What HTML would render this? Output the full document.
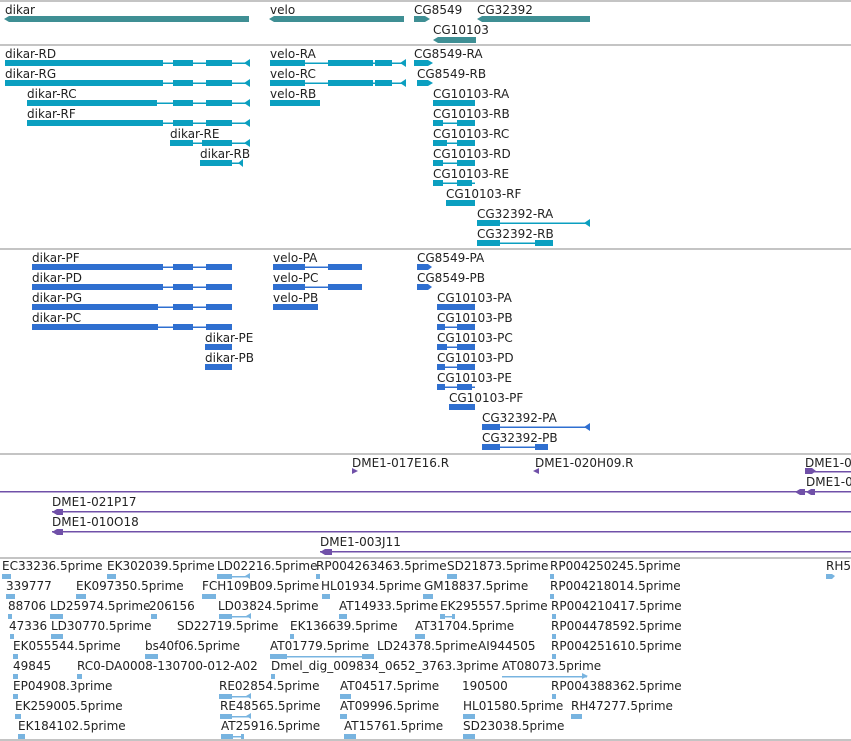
<!DOCTYPE html>
<html><head><meta charset="utf-8"><style>
html,body{margin:0;padding:0;background:#fff;width:851px;height:741px;overflow:hidden}
svg{display:block}
text{font-family:"DejaVu Sans","Liberation Sans",sans-serif;font-size:12px;fill:#222}
.g{fill:#3f8f94}.t{fill:#0b9fc0}.p{fill:#2f6fd0}.d{fill:#7050a8}.e{fill:#78b4e0}
.sep{stroke:#c4c4c4;stroke-width:2}
</style></head><body>
<svg width="851" height="741" viewBox="0 0 851 741">
<g class="sep"><line x1="0" y1="1" x2="851" y2="1"/><line x1="0" y1="45" x2="851" y2="45"/><line x1="0" y1="249" x2="851" y2="249"/><line x1="0" y1="454" x2="851" y2="454"/><line x1="0" y1="558" x2="851" y2="558"/><line x1="0" y1="740" x2="851" y2="740"/></g>

<!-- genes -->
<text x="5" y="14">dikar</text><polygon class="g" points="4,19 9,16 249,16 249,22 9,22"/>
<text x="270" y="14">velo</text><polygon class="g" points="269,19 274,16 404,16 404,22 274,22"/>
<text x="414" y="14">CG8549</text><polygon class="g" points="414,16 425,16 430,19 425,22 414,22"/>
<text x="477" y="14">CG32392</text><polygon class="g" points="477,19 482,16 590,16 590,22 482,22"/>
<text x="433" y="34">CG10103</text><polygon class="g" points="433,40 438,37 476,37 476,43 438,43"/>

<!-- transcripts -->
<g class="t">
<text x="5" y="58">dikar-RD</text><rect x="5" y="62.5" width="245" height="1.5"/><rect x="5" y="60" width="158" height="6"/><rect x="173" y="60" width="20" height="6"/><rect x="206" y="60" width="26" height="6"/><polygon points="244,63 250,59 250,67"/>
<text x="5" y="78">dikar-RG</text><rect x="5" y="82.5" width="245" height="1.5"/><rect x="5" y="80" width="158" height="6"/><rect x="173" y="80" width="20" height="6"/><rect x="206" y="80" width="26" height="6"/><polygon points="244,83 250,79 250,87"/>
<text x="27" y="98">dikar-RC</text><rect x="27" y="102.5" width="223" height="1.5"/><rect x="27" y="100" width="130" height="6"/><rect x="173" y="100" width="20" height="6"/><rect x="206" y="100" width="26" height="6"/><polygon points="244,103 250,99 250,107"/>
<text x="27" y="118">dikar-RF</text><rect x="27" y="122.5" width="223" height="1.5"/><rect x="27" y="120" width="136" height="6"/><rect x="173" y="120" width="20" height="6"/><rect x="206" y="120" width="26" height="6"/><polygon points="244,123 250,119 250,127"/>
<text x="170" y="138">dikar-RE</text><rect x="170" y="142.5" width="80" height="1.5"/><rect x="170" y="140" width="23" height="6"/><rect x="202" y="140" width="30" height="6"/><polygon points="244,143 250,139 250,147"/>
<text x="200" y="158">dikar-RB</text><rect x="200" y="162.5" width="43" height="1.5"/><rect x="200" y="160" width="32" height="6"/><polygon points="238,163 243,159 243,167"/>

<text x="270" y="58">velo-RA</text><rect x="270" y="62.5" width="136" height="1.5"/><rect x="270" y="60" width="35" height="6"/><rect x="328" y="60" width="45" height="6"/><rect x="375" y="60" width="17" height="6"/><polygon points="400,63 406,59 406,67"/>
<text x="270" y="78">velo-RC</text><rect x="270" y="82.5" width="136" height="1.5"/><rect x="270" y="80" width="35" height="6"/><rect x="328" y="80" width="45" height="6"/><rect x="375" y="80" width="17" height="6"/><polygon points="400,83 406,79 406,87"/>
<text x="270" y="98">velo-RB</text><rect x="270" y="100" width="50" height="6"/>
<text x="414" y="58">CG8549-RA</text><polygon points="414,60 428,60 433,63 428,66 414,66"/>
<text x="417" y="78">CG8549-RB</text><polygon points="417,80 428,80 433,83 428,86 417,86"/>
<text x="433" y="98">CG10103-RA</text><rect x="433" y="100" width="42" height="6"/>
<text x="433" y="118">CG10103-RB</text><rect x="433" y="122.5" width="42" height="1.5"/><rect x="433" y="120" width="10" height="6"/><rect x="457" y="120" width="18" height="6"/>
<text x="433" y="138">CG10103-RC</text><rect x="433" y="142.5" width="42" height="1.5"/><rect x="433" y="140" width="14" height="6"/><rect x="457" y="140" width="18" height="6"/>
<text x="433" y="158">CG10103-RD</text><rect x="433" y="162.5" width="42" height="1.5"/><rect x="433" y="160" width="10" height="6"/><rect x="457" y="160" width="18" height="6"/>
<text x="433" y="178">CG10103-RE</text><rect x="433" y="182.5" width="42" height="1.5"/><rect x="433" y="180" width="10" height="6"/><rect x="457" y="180" width="15" height="6"/>
<text x="446" y="198">CG10103-RF</text><rect x="446" y="200" width="29" height="6"/>
<text x="477" y="218">CG32392-RA</text><rect x="477" y="222.5" width="113" height="1.5"/><rect x="477" y="220" width="23" height="6"/><polygon points="584,223 590,219 590,227"/>
<text x="477" y="238">CG32392-RB</text><rect x="477" y="242.5" width="76" height="1.5"/><rect x="477" y="240" width="23" height="6"/><rect x="535" y="240" width="18" height="6"/>
</g>

<!-- proteins -->
<g class="p">
<text x="32" y="262">dikar-PF</text><rect x="32" y="266.5" width="200" height="1.5"/><rect x="32" y="264" width="131" height="6"/><rect x="173" y="264" width="20" height="6"/><rect x="206" y="264" width="26" height="6"/>
<text x="32" y="282">dikar-PD</text><rect x="32" y="286.5" width="200" height="1.5"/><rect x="32" y="284" width="131" height="6"/><rect x="173" y="284" width="20" height="6"/><rect x="206" y="284" width="26" height="6"/>
<text x="32" y="302">dikar-PG</text><rect x="32" y="306.5" width="200" height="1.5"/><rect x="32" y="304" width="126" height="6"/><rect x="173" y="304" width="20" height="6"/><rect x="206" y="304" width="26" height="6"/>
<text x="32" y="322">dikar-PC</text><rect x="32" y="326.5" width="200" height="1.5"/><rect x="32" y="324" width="126" height="6"/><rect x="173" y="324" width="20" height="6"/><rect x="206" y="324" width="26" height="6"/>
<text x="205" y="342">dikar-PE</text><rect x="205" y="344" width="27" height="6"/>
<text x="205" y="362">dikar-PB</text><rect x="205" y="364" width="27" height="6"/>
<text x="273" y="262">velo-PA</text><rect x="273" y="266.5" width="89" height="1.5"/><rect x="273" y="264" width="32" height="6"/><rect x="328" y="264" width="34" height="6"/>
<text x="273" y="282">velo-PC</text><rect x="273" y="286.5" width="89" height="1.5"/><rect x="273" y="284" width="32" height="6"/><rect x="328" y="284" width="34" height="6"/>
<text x="273" y="302">velo-PB</text><rect x="273" y="304" width="45" height="6"/>
<text x="417" y="262">CG8549-PA</text><polygon points="417,264 428,264 432,267 428,270 417,270"/>
<text x="417" y="282">CG8549-PB</text><polygon points="417,284 428,284 432,287 428,290 417,290"/>
<text x="437" y="302">CG10103-PA</text><rect x="437" y="304" width="38" height="6"/>
<text x="437" y="322">CG10103-PB</text><rect x="437" y="326.5" width="38" height="1.5"/><rect x="437" y="324" width="8" height="6"/><rect x="457" y="324" width="18" height="6"/>
<text x="437" y="342">CG10103-PC</text><rect x="437" y="346.5" width="38" height="1.5"/><rect x="437" y="344" width="10" height="6"/><rect x="457" y="344" width="18" height="6"/>
<text x="437" y="362">CG10103-PD</text><rect x="437" y="366.5" width="38" height="1.5"/><rect x="437" y="364" width="8" height="6"/><rect x="457" y="364" width="18" height="6"/>
<text x="437" y="382">CG10103-PE</text><rect x="437" y="386.5" width="38" height="1.5"/><rect x="437" y="384" width="8" height="6"/><rect x="457" y="384" width="15" height="6"/>
<text x="449" y="402">CG10103-PF</text><rect x="449" y="404" width="26" height="6"/>
<text x="482" y="422">CG32392-PA</text><rect x="482" y="426.5" width="108" height="1.5"/><rect x="482" y="424" width="18" height="6"/><polygon points="584,427 590,423 590,431"/>
<text x="482" y="442">CG32392-PB</text><rect x="482" y="446.5" width="66" height="1.5"/><rect x="482" y="444" width="18" height="6"/><rect x="535" y="444" width="13" height="6"/>
</g>

<!-- DME -->
<g class="d">
<text x="352" y="467">DME1-017E16.R</text><polygon points="352,468 358,471 352,474"/>
<text x="535" y="467">DME1-020H09.R</text><polygon points="539,468 533,471 539,474"/>
<text x="805" y="467">DME1-0</text><polygon points="805,468 812,468 816,471 812,474 805,474"/><rect x="805" y="471" width="46" height="1.5"/>
<text x="806" y="486">DME1-0</text><rect x="0" y="491" width="851" height="1.5"/><polygon points="795,492 800,489 805,489 805,495 800,495"/><polygon points="806,492 811,489 815,489 815,495 811,495"/>
<text x="52" y="506">DME1-021P17</text><rect x="52" y="511" width="799" height="1.5"/><polygon points="52,512 57,509 63,509 63,515 57,515"/>
<text x="52" y="526">DME1-010O18</text><rect x="52" y="531" width="799" height="1.5"/><polygon points="52,532 57,529 63,529 63,535 57,535"/>
<text x="320" y="546">DME1-003J11</text><rect x="320" y="551" width="531" height="1.5"/><polygon points="320,552 325,549 332,549 332,555 325,555"/>
</g>

<!-- ESTs -->
<g class="e">
<text x="2" y="570">EC33236.5prime</text><rect x="2" y="574" width="9" height="5"/>
<text x="107" y="570">EK302039.5prime</text><rect x="107" y="574" width="9" height="5"/>
<text x="217" y="570">LD02216.5prime</text><rect x="217" y="574" width="15" height="5"/><rect x="232" y="576" width="18" height="1.5"/><polygon points="245,576 250,573 250,579"/>
<text x="316" y="570">RP004263463.5prime</text><rect x="316" y="574" width="4" height="5"/>
<text x="447" y="570">SD21873.5prime</text><rect x="447" y="574" width="10" height="5"/>
<text x="550" y="570">RP004250245.5prime</text><rect x="550" y="574" width="4" height="5"/>
<text x="826" y="570">RH5</text><polygon points="826,574 832,574 835,576 832,579 826,579"/>

<text x="6" y="590">339777</text><rect x="6" y="594" width="9" height="5"/>
<text x="76" y="590">EK097350.5prime</text><rect x="76" y="594" width="10" height="5"/>
<text x="202" y="590">FCH109B09.5prime</text><rect x="202" y="594" width="14" height="5"/>
<text x="321" y="590">HL01934.5prime</text><rect x="322" y="594" width="8" height="5"/>
<text x="424" y="590">GM18837.5prime</text><rect x="423" y="594" width="10" height="5"/>
<text x="550" y="590">RP004218014.5prime</text><rect x="550" y="594" width="4" height="5"/>

<text x="8" y="610">88706</text><rect x="8" y="614" width="4" height="5"/>
<text x="50" y="610">LD25974.5prime</text><rect x="50" y="614" width="13" height="5"/>
<text x="149" y="610">206156</text><rect x="151" y="614" width="6" height="5"/>
<text x="218" y="610">LD03824.5prime</text><rect x="219" y="614" width="13" height="5"/><rect x="232" y="616" width="19" height="1.5"/><polygon points="246,616 251,613 251,619"/>
<text x="339" y="610">AT14933.5prime</text><rect x="339" y="614" width="8" height="5"/>
<text x="440" y="610">EK295557.5prime</text><rect x="440" y="614" width="5" height="5"/><rect x="445" y="616" width="8" height="1.5"/><rect x="452" y="614" width="3" height="5"/>
<text x="551" y="610">RP004210417.5prime</text><rect x="552" y="614" width="4" height="5"/>

<text x="9" y="630">47336</text><rect x="10" y="634" width="4" height="5"/>
<text x="51" y="630">LD30770.5prime</text><rect x="51" y="634" width="12" height="5"/>
<text x="177" y="630">SD22719.5prime</text>
<text x="290" y="630">EK136639.5prime</text><rect x="290" y="634" width="4" height="5"/>
<text x="415" y="630">AT31704.5prime</text><rect x="415" y="634" width="10" height="5"/>
<text x="551" y="630">RP004478592.5prime</text><rect x="552" y="634" width="4" height="5"/>

<text x="13" y="650">EK055544.5prime</text><rect x="13" y="654" width="5" height="5"/>
<text x="145" y="650">bs40f06.5prime</text><rect x="145" y="654" width="13" height="5"/>
<text x="270" y="650">AT01779.5prime</text><rect x="270" y="654" width="17" height="5"/><rect x="287" y="656" width="75" height="1.5"/><rect x="362" y="654" width="12" height="5"/>
<text x="377" y="650">LD24378.5prime</text>
<text x="478" y="650">AI944505</text>
<text x="551" y="650">RP004251610.5prime</text><rect x="552" y="654" width="4" height="5"/>

<text x="13" y="670">49845</text><rect x="13" y="674" width="5" height="5"/>
<text x="77" y="670">RC0-DA0008-130700-012-A02</text><rect x="77" y="674" width="5" height="5"/>
<text x="271" y="670">Dmel_dig_009834_0652_3763.3prime</text><rect x="271" y="674" width="4" height="5"/>
<text x="502" y="670">AT08073.5prime</text><rect x="502" y="676" width="85" height="1.5"/><polygon points="582,673 588,676 582,679"/>

<text x="13" y="690">EP04908.3prime</text><rect x="13" y="694" width="5" height="5"/>
<text x="219" y="690">RE02854.5prime</text><rect x="219" y="694" width="13" height="5"/><rect x="232" y="696" width="19" height="1.5"/><polygon points="246,696 251,693 251,699"/>
<text x="340" y="690">AT04517.5prime</text><rect x="340" y="694" width="11" height="5"/>
<text x="462" y="690">190500</text>
<text x="551" y="690">RP004388362.5prime</text><rect x="552" y="694" width="4" height="5"/>

<text x="15" y="710">EK259005.5prime</text><rect x="15" y="714" width="6" height="5"/>
<text x="220" y="710">RE48565.5prime</text><rect x="220" y="714" width="12" height="5"/><rect x="232" y="716" width="19" height="1.5"/><polygon points="246,716 251,713 251,719"/>
<text x="340" y="710">AT09996.5prime</text><rect x="340" y="714" width="7" height="5"/>
<text x="463" y="710">HL01580.5prime</text><rect x="463" y="714" width="12" height="5"/>
<text x="571" y="710">RH47277.5prime</text><rect x="571" y="714" width="11" height="5"/>

<text x="18" y="730">EK184102.5prime</text><rect x="18" y="734" width="7" height="5"/>
<text x="221" y="730">AT25916.5prime</text><rect x="221" y="734" width="12" height="5"/><rect x="233" y="736" width="9" height="1.5"/><rect x="241" y="734" width="3" height="5"/>
<text x="344" y="730">AT15761.5prime</text><rect x="344" y="734" width="12" height="5"/>
<text x="463" y="730">SD23038.5prime</text><rect x="463" y="734" width="12" height="5"/>
</g>
</svg>
</body></html>
